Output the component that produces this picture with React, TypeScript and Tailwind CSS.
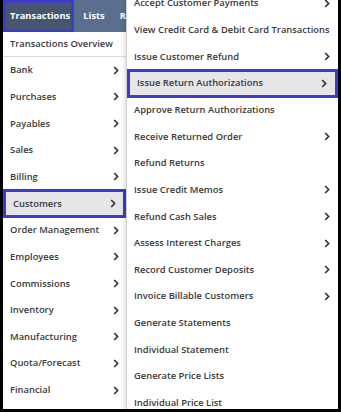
import React from 'react';

const leftItems = [
  'Bank',
  'Purchases',
  'Payables',
  'Sales',
  'Billing',
  'Customers',
  'Order Management',
  'Employees',
  'Commissions',
  'Inventory',
  'Manufacturing',
  'Quota/Forecast',
  'Financial',
];

const subItems: { label: string; arrow: boolean }[] = [
  { label: 'Accept Customer Payments', arrow: true },
  { label: 'View Credit Card & Debit Card Transactions', arrow: false },
  { label: 'Issue Customer Refund', arrow: true },
  { label: 'Issue Return Authorizations', arrow: true },
  { label: 'Approve Return Authorizations', arrow: false },
  { label: 'Receive Returned Order', arrow: true },
  { label: 'Refund Returns', arrow: false },
  { label: 'Issue Credit Memos', arrow: true },
  { label: 'Refund Cash Sales', arrow: true },
  { label: 'Assess Interest Charges', arrow: true },
  { label: 'Record Customer Deposits', arrow: true },
  { label: 'Invoice Billable Customers', arrow: true },
  { label: 'Generate Statements', arrow: false },
  { label: 'Individual Statement', arrow: false },
  { label: 'Generate Price Lists', arrow: false },
  { label: 'Individual Price List', arrow: false },
];

function Chevron() {
  return (
    <svg width="6" height="9" viewBox="0 0 6 9" className="shrink-0">
      <path d="M1.2 1 L4.6 4.5 L1.2 8" fill="none" stroke="#333" strokeWidth="1.7" />
    </svg>
  );
}

export default function App() {
  return (
    <div
      className="w-[341px] h-[412px] bg-black pl-[3px] pr-[3px] pb-[3px]"
      style={{ fontFamily: '"Open Sans", "Liberation Sans", sans-serif' }}
    >
      <div className="flex h-full overflow-hidden bg-white text-[9.4px] font-semibold text-[#3a3a3a]">
        {/* left column */}
        <div className="w-[123px] shrink-0 flex flex-col">
          <div className="h-[32px] bg-[#5a6f8f] flex items-stretch text-white font-bold whitespace-nowrap">
            <div className="w-[73px] border-[3px] border-[#3c3cc4] bg-[#46566f] flex items-center pl-[4px]">
              Transactions
            </div>
            <div className="flex items-center pl-[9px]">Lists</div>
            <div className="flex items-center pl-[15px]">R</div>
          </div>
          <div className="h-[25px] flex items-center pl-[7px] border-b border-[#d9d9d9] whitespace-nowrap">
            Transactions Overview
          </div>
          {leftItems.map((item) => {
            const active = item === 'Customers';
            return (
              <div
                key={item}
                className={`h-[26.67px] shrink-0 flex items-center justify-between pl-[7px] pr-[7px] whitespace-nowrap ${
                  active ? 'bg-[#e6e6e6] border-[3px] border-[#3c3cc4] pl-[4px] pr-[4px] -my-[1px] h-[28.67px]' : ''
                }`}
              >
                <span>{item}</span>
                <Chevron />
              </div>
            );
          })}
        </div>

        {/* submenu */}
        <div className="flex-1 border-l border-[#cfcfcf] shadow-[-2px_0_4px_rgba(0,0,0,0.12)] bg-white">
          <div className="mt-[-10px] flex flex-col">
            {subItems.map(({ label, arrow }) => {
              const active = label === 'Issue Return Authorizations';
              return (
                <div
                  key={label}
                  className={`h-[26.67px] shrink-0 flex items-center justify-between pl-[7px] pr-[8px] whitespace-nowrap ${
                    active ? 'bg-[#e6e6e6] border-[3px] border-[#3c3cc4] pl-[4px] pr-[5px] -my-[1px] h-[28.67px]' : ''
                  }`}
                >
                  <span>{label}</span>
                  {arrow && <Chevron />}
                </div>
              );
            })}
          </div>
        </div>
      </div>
    </div>
  );
}
